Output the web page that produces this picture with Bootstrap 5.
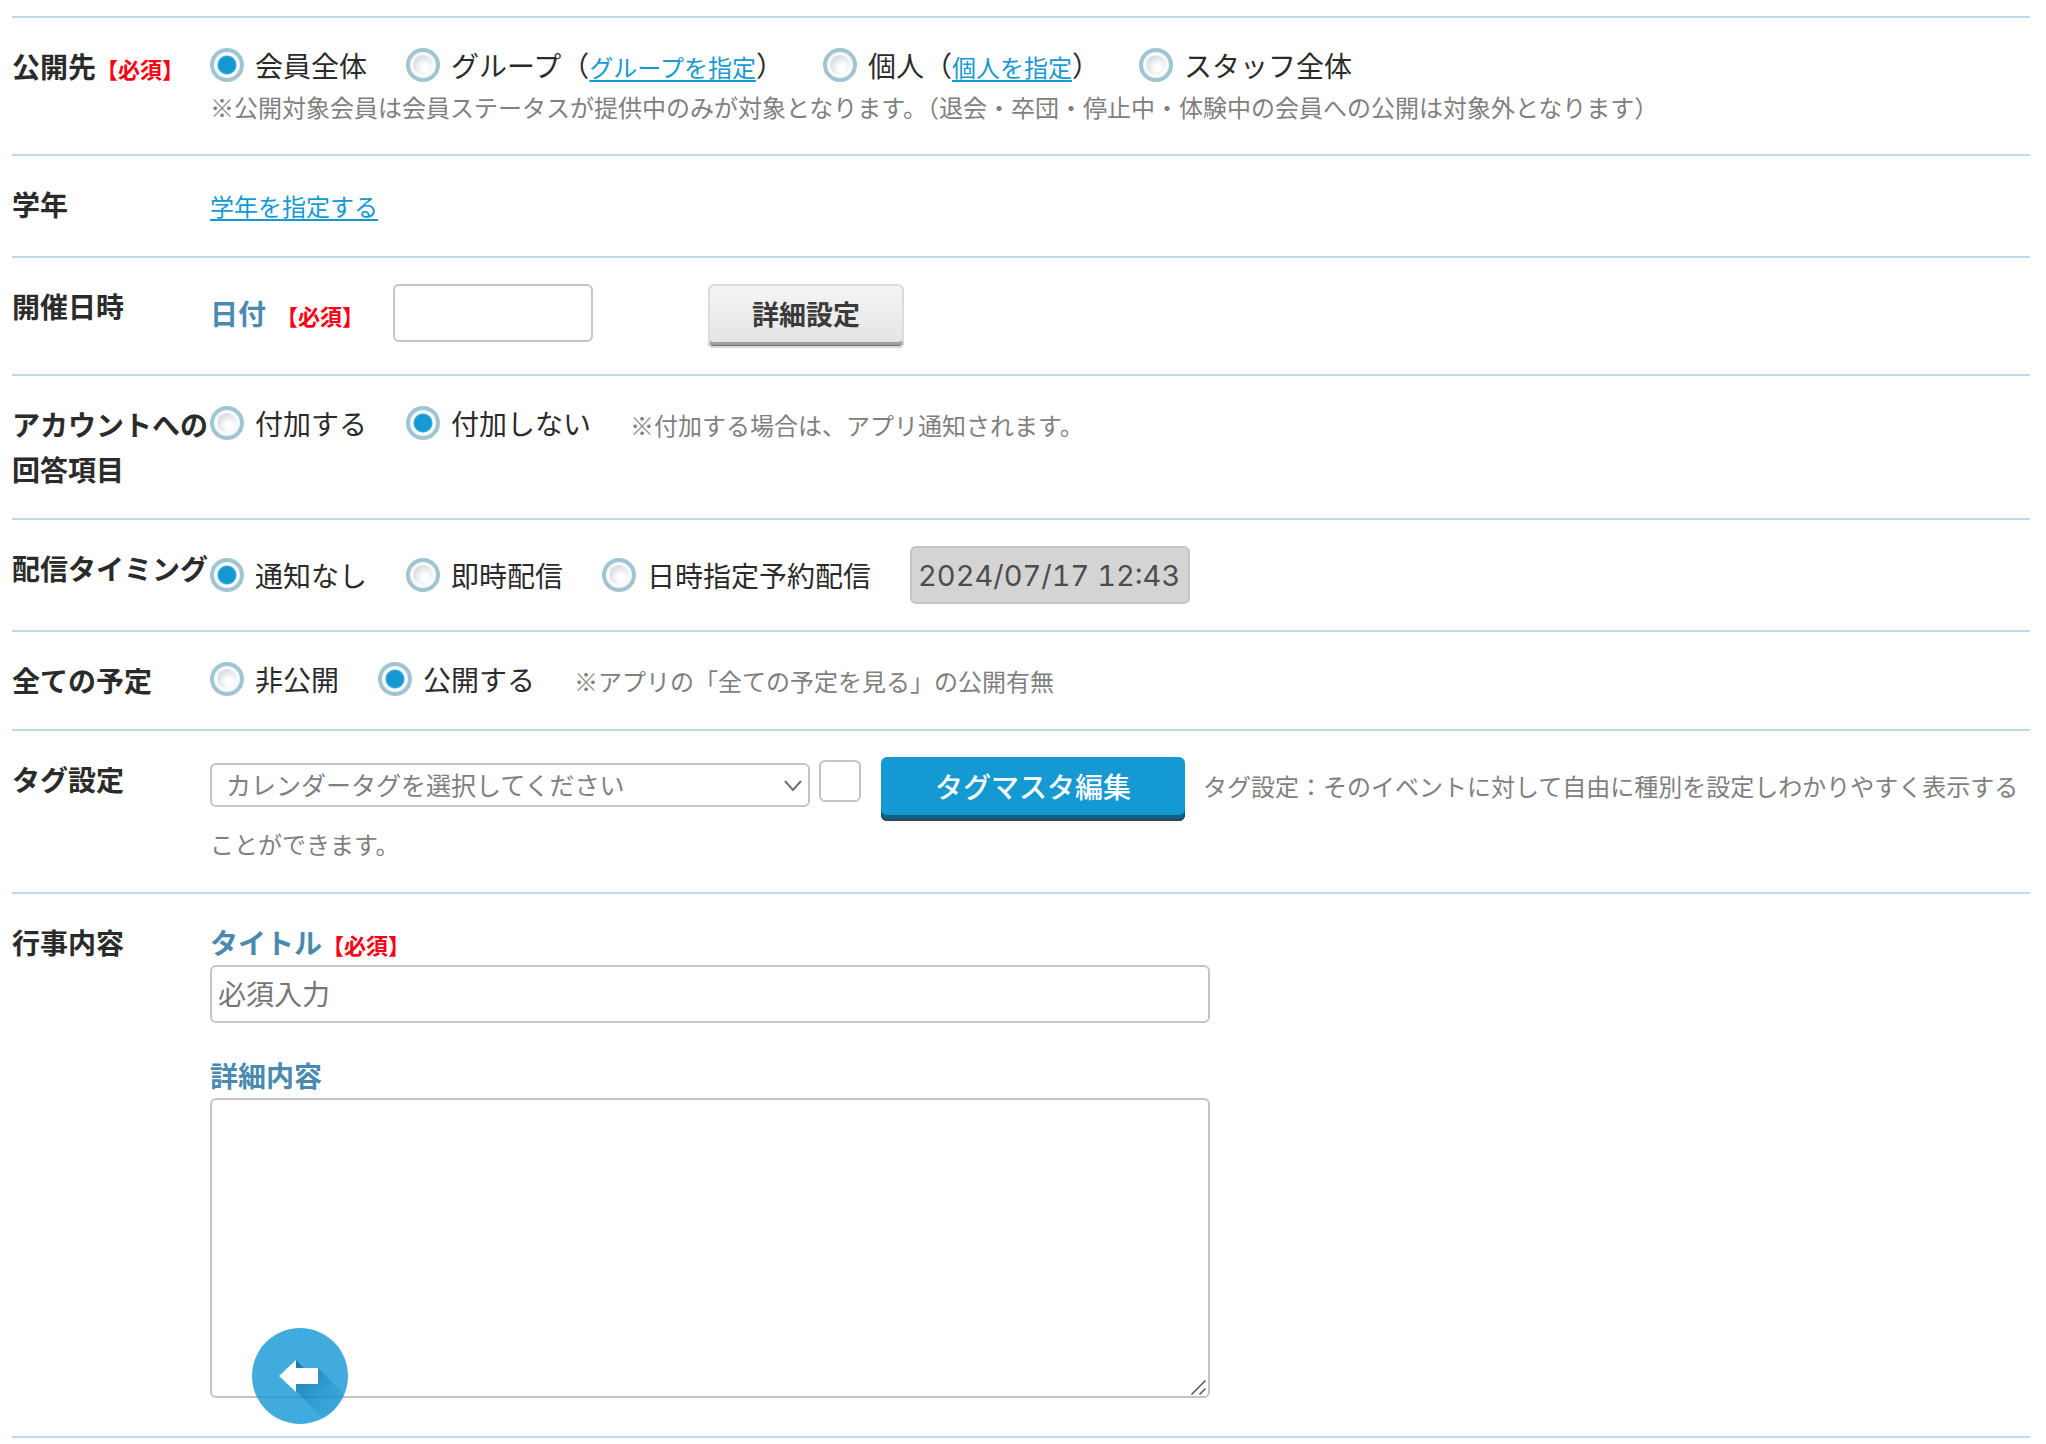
<!DOCTYPE html>
<html lang="ja">
<head>
<meta charset="utf-8">
<meta name="viewport" content="width=device-width, initial-scale=1">
<title>行事登録</title>
<link href="https://cdn.jsdelivr.net/npm/bootstrap@5.3.0/dist/css/bootstrap.min.css" rel="stylesheet">
<style>
  body { font-family: "Noto Sans CJK JP", sans-serif; font-size: 28px; line-height: 45px; color: #2b2b2b; background: #fff; }
  .event-form { padding: 16px 16px 0 12px; }
  .form-line { border-top: 2px solid #b9dae6; padding: 26px 0; }
  .form-line:last-child { border-bottom: 2px solid #b9dae6; }
  .line-label { width: 198px; flex: none; font-size: 28px; font-weight: 700; white-space: nowrap; }
  .line-body { flex: 1; min-width: 0; }
  .required { color: #ff0012; font-size: 22px; line-height: 22px; font-weight: 700; }
  .sub-label { color: #4a89b0; font-weight: 700; }
  .day-group { column-gap: 10px; margin-right: 29px; }
  .hint { color: #7f7f7f; font-size: 24px; }
  .hint-below { line-height: 42px; }
  .text-link { color: #1499d3; font-size: 24px; line-height: 24px; text-underline-offset: 3px; text-decoration-thickness: 2px; }
  .link-line { padding-bottom: 3px; }
  .choices { column-gap: 39px; }
  .choice { display: flex; align-items: center; column-gap: 11px; height: 42px; line-height: 42px; white-space: nowrap; }
  .choice input {
    appearance: none; flex: none; width: 34px; height: 34px; margin: 0; border-radius: 50%;
    border: 4px solid #a1c4d2;
    background: radial-gradient(circle at 62% 65%, #fff 15%, #eceef0 45%, #d3d8db 75%) 3px 3px / 20px 20px no-repeat;
    background-clip: padding-box;
    box-shadow: inset 0 0 0 2px #f3f8fa, inset 0 0 2px 3px #fff;
  }
  .choice input:checked { background: radial-gradient(circle closest-side, #1499d3 70%, #fff 78%); }
  .box { border: 2px solid #c4c4c4; border-radius: 6px; background: #fff; height: 58px; padding: 0 6px; color: #2b2b2b; }
  .box::placeholder { color: #757575; opacity: 1; }
  .date-box { width: 200px; margin-right: 115px; }
  .reserve-box { width: 280px; font-family: Inter, sans-serif; font-size: 29px; font-variant-numeric: tabular-nums; }
  .reserve-box:disabled { background: #d4d4d4; color: #4d4d4d; }
  .wide-box { width: 100%; max-width: 1000px; }
  .title-box { margin-bottom: 30px; padding-bottom: 3px; }
  .push-btn { border: 0; border-radius: 6px; height: 64px; padding: 0 0 6px; line-height: 45px; font-weight: 700; }
  .push-grey { width: 196px; font-size: 27px; color: #3a3a3a; background: linear-gradient(#f5f5f5, #e3e3e3);
    box-shadow: inset 0 0 0 2px #dcdcdc, inset 0 -3px 0 #6f6f6f, inset 0 -6px 0 #a0a0a0; }
  .push-blue { width: 304px; margin: 0 18px 0 20px; font-size: 28px; font-weight: 500; color: #fff; background: #1499d3;
    box-shadow: inset 0 -2px 0 #36454d, inset 0 -6px 0 #0d6186; vertical-align: middle; }
  .tag-select { width: 600px; height: 44px; font-size: 25px; line-height: 36px; color: #7f7f7f; padding: 0 40px 2px 14px;
    appearance: none; border: 2px solid #c4c4c4; border-radius: 6px; background: transparent; }
  .tag-pick { position: relative; display: inline-block; height: 44px; line-height: 36px; vertical-align: top; margin: 6px 9px 0 0; }
  .tag-pick svg { position: absolute; right: 8px; top: 17px; pointer-events: none; }
  .tag-color { width: 42px; height: 42px; vertical-align: top; margin-top: 3px; }
  .area-wrap { position: relative; max-width: 1000px; margin-bottom: 12px; }
  .area-wrap textarea { display: block; height: 300px; resize: none; }
  .area-wrap svg { position: absolute; right: 4px; bottom: 3px; }
  .back-btn { position: fixed; left: 252px; bottom: 20px; width: 96px; height: 96px; border: 0; padding: 0; background: none; }
  .back-btn svg { display: block; }
</style>
<script src="https://cdn.jsdelivr.net/npm/bootstrap@5.3.0/dist/js/bootstrap.bundle.min.js"></script>
</head>
<body>
<form class="event-form">

  <div class="form-line d-flex">
    <div class="line-label">公開先<span class="required">【必須】</span></div>
    <div class="line-body">
      <div class="choices d-flex flex-wrap">
        <div class="choice"><input type="radio" name="target" id="t1" checked><label for="t1">会員全体</label></div>
        <div class="choice"><input type="radio" name="target" id="t2"><span><label for="t2">グループ（</label><a class="text-link" href="#">グループを指定</a>）</span></div>
        <div class="choice"><input type="radio" name="target" id="t3"><span><label for="t3">個人（</label><a class="text-link" href="#">個人を指定</a>）</span></div>
        <div class="choice"><input type="radio" name="target" id="t4"><label for="t4">スタッフ全体</label></div>
      </div>
      <div class="hint hint-below">※公開対象会員は会員ステータスが提供中のみが対象となります。（退会・卒団・停止中・体験中の会員への公開は対象外となります）</div>
    </div>
  </div>

  <div class="form-line d-flex">
    <div class="line-label">学年</div>
    <div class="line-body link-line"><a class="text-link" href="#">学年を指定する</a></div>
  </div>

  <div class="form-line d-flex">
    <div class="line-label">開催日時</div>
    <div class="line-body d-flex align-items-start">
      <div class="d-flex align-items-center">
        <div class="day-group d-flex align-items-baseline"><label class="sub-label" for="day">日付</label><span class="required">【必須】</span></div>
        <input class="box date-box" type="text" id="day">
      </div>
      <button class="push-btn push-grey" type="button">詳細設定</button>
    </div>
  </div>

  <div class="form-line d-flex">
    <div class="line-label">アカウントへの<br>回答項目</div>
    <div class="line-body choices d-flex flex-wrap align-content-start">
      <div class="choice"><input type="radio" name="answer" id="a1"><label for="a1">付加する</label></div>
      <div class="choice"><input type="radio" name="answer" id="a2" checked><label for="a2">付加しない</label></div>
      <span class="hint">※付加する場合は、アプリ通知されます。</span>
    </div>
  </div>

  <div class="form-line d-flex">
    <div class="line-label">配信タイミング</div>
    <div class="line-body choices d-flex flex-wrap align-items-center">
      <div class="choice"><input type="radio" name="timing" id="d1" checked><label for="d1">通知なし</label></div>
      <div class="choice"><input type="radio" name="timing" id="d2"><label for="d2">即時配信</label></div>
      <div class="choice"><input type="radio" name="timing" id="d3"><label for="d3">日時指定予約配信</label></div>
      <input class="box reserve-box" type="text" value="2024/07/17 12:43" aria-label="予約配信日時" disabled>
    </div>
  </div>

  <div class="form-line d-flex">
    <div class="line-label">全ての予定</div>
    <div class="line-body choices d-flex flex-wrap">
      <div class="choice"><input type="radio" name="open" id="o1"><label for="o1">非公開</label></div>
      <div class="choice"><input type="radio" name="open" id="o2" checked><label for="o2">公開する</label></div>
      <span class="hint">※アプリの「全ての予定を見る」の公開有無</span>
    </div>
  </div>

  <div class="form-line d-flex">
    <label class="line-label" for="tag">タグ設定</label>
    <div class="line-body hint"><span class="tag-pick"><select class="tag-select" id="tag"><option>カレンダータグを選択してください</option></select><svg width="18" height="12" viewBox="0 0 18 12" fill="none" stroke="#707070" stroke-width="2" aria-hidden="true"><path d="M1 1l8 9 8-9"/></svg></span><input class="box tag-color" type="text" aria-label="タグの色" readonly><button class="push-btn push-blue" type="button">タグマスタ編集</button>タグ設定：そのイベントに対して自由に種別を設定しわかりやすく表示することができます。</div>
  </div>

  <div class="form-line d-flex">
    <div class="line-label">行事内容</div>
    <div class="line-body">
      <div><label class="sub-label" for="ttl">タイトル</label><span class="required">【必須】</span></div>
      <input class="box wide-box title-box d-block" type="text" id="ttl" placeholder="必須入力">
      <label class="sub-label d-block" for="detail">詳細内容</label>
      <div class="area-wrap">
        <textarea class="box wide-box" id="detail"></textarea>
        <svg width="15" height="15" viewBox="0 0 15 15" stroke="#555" stroke-width="1.5" aria-hidden="true"><path d="M.5 14.5l14-14M8.500 14.500l6-6"/></svg>
      </div>
    </div>
  </div>
</form>

<button class="back-btn" type="button" aria-label="戻る">
  <svg width="96" height="96" viewBox="0 0 96 96">
    <defs>
      <clipPath id="disc"><circle cx="48" cy="48" r="48"/></clipPath>
      <linearGradient id="shade" x1="44" y1="36" x2="80" y2="76" gradientUnits="userSpaceOnUse"><stop offset="0" stop-color="#005a88" stop-opacity=".6"/><stop offset="1" stop-color="#0a84bd" stop-opacity=".15"/></linearGradient>
    </defs>
    <circle cx="48" cy="48" r="48" fill="#1296d6" fill-opacity=".8"/>
    <path clip-path="url(#disc)" fill="url(#shade)" d="M44 32l8 8h14l30 30v26H76L44 63z"/>
    <path fill="#fff" d="M27 48l17-16v8h22v16H44v8z"/>
  </svg>
</button>
</body>
</html>
